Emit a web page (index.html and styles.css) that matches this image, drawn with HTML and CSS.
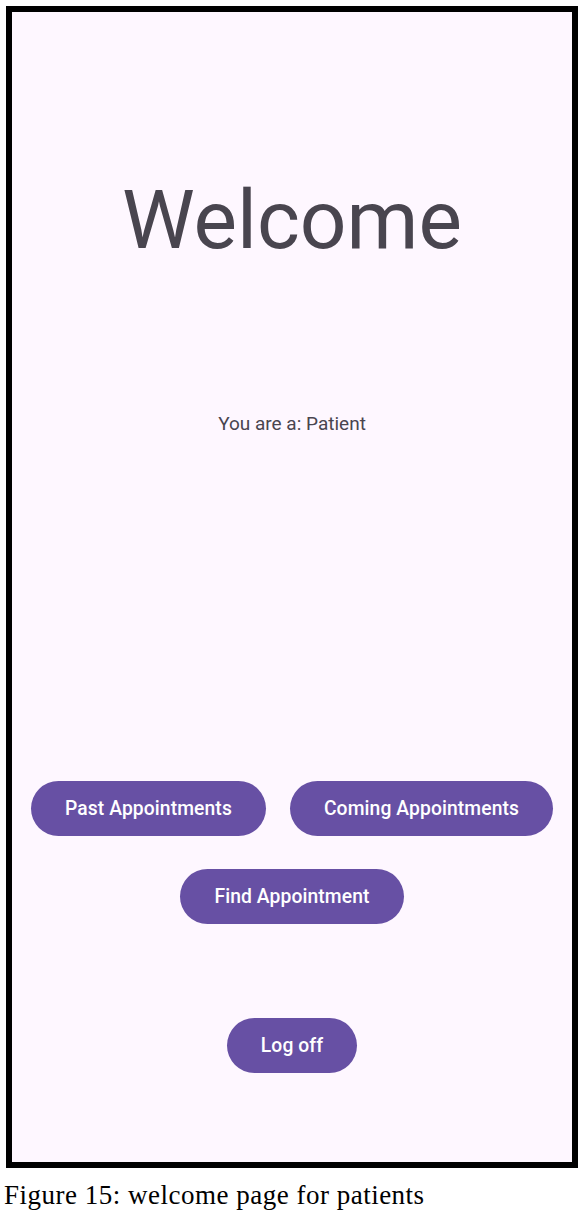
FILE: index.html
```html
<!DOCTYPE html>
<html>
<head>
<meta charset="utf-8">
<link rel="stylesheet" href="styles.css">
</head>
<body>
<div class="frame">
  <h1 class="title">Welcome</h1>
  <p class="role">You are a: Patient</p>
  <div class="actions">
    <div class="row">
      <button class="btn">Past Appointments</button>
      <button class="btn">Coming Appointments</button>
    </div>
    <div class="row">
      <button class="btn">Find Appointment</button>
    </div>
    <div class="row logoff">
      <button class="btn">Log off</button>
    </div>
  </div>
</div>
<p class="caption">Figure 15: welcome page for patients</p>
</body>
</html>
```
FILE: styles.css
```css
html, body {
  margin: 0;
  padding: 0;
  background: #ffffff;
}
.frame {
  box-sizing: border-box;
  margin: 6px 0 0 6px;
  width: 572px;
  height: 1162px;
  border: 6px solid #000;
  background: #fef7ff;
  display: flex;
  flex-direction: column;
  align-items: center;
  font-family: Roboto, "Noto Sans", sans-serif;
}
.title {
  margin: 158px 0 0 0;
  font-size: 82px;
  line-height: 100px;
  font-weight: 400;
  color: #49454f;
}
.role {
  margin: 142px 0 0 0;
  font-size: 19px;
  line-height: 24px;
  color: #49454f;
}
.actions {
  margin-top: 345px;
  display: flex;
  flex-direction: column;
  align-items: center;
  gap: 33px;
}
.row {
  display: flex;
  gap: 24px;
  justify-content: center;
}
.row.logoff {
  margin-top: 61px;
}
.btn {
  height: 55px;
  padding: 0 34px;
  border: none;
  border-radius: 28px;
  background: #6750a4;
  color: #ffffff;
  font-family: Roboto, "Noto Sans", sans-serif;
  font-size: 19.3px;
  font-weight: 500;
  letter-spacing: 0.1px;
}
.caption {
  margin: 12px 0 0 4px;
  font-family: "Liberation Serif", "Times New Roman", serif;
  font-size: 27px;
  line-height: 30px;
  letter-spacing: 0.5px;
  color: #000;
}
```
